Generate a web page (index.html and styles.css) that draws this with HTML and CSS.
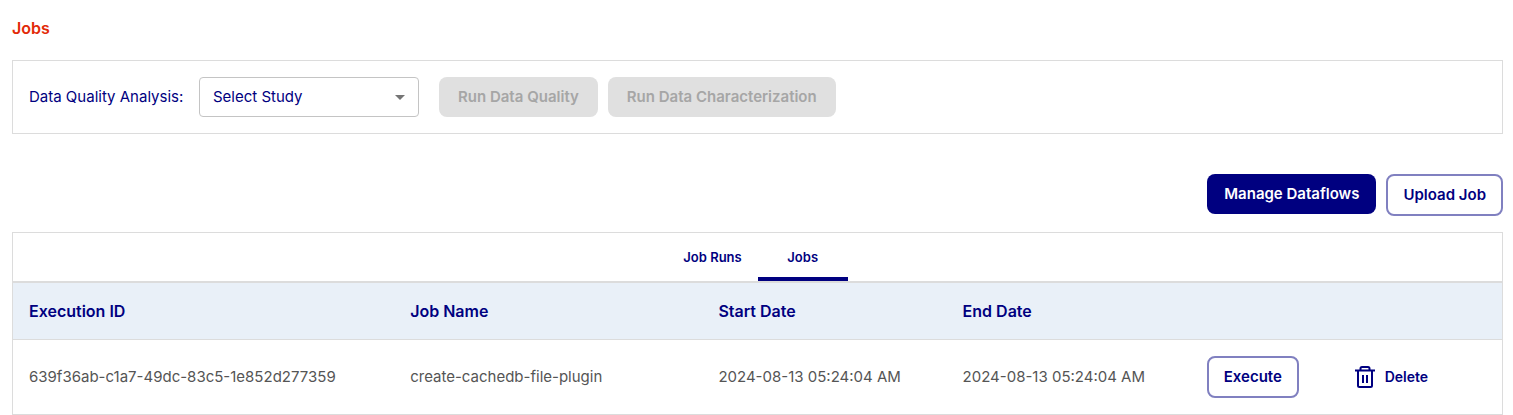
FILE: index.html
```html
<!DOCTYPE html>
<html lang="en">
<head>
<meta charset="utf-8">
<title>Jobs</title>
<link rel="stylesheet" href="styles.css">
</head>
<body>
<main class="page">
  <h1 class="title">Jobs</h1>
  <section class="panel analysis">
    <label class="analysis-label" for="study">Data Quality Analysis:</label>
    <div class="select">
      <select class="select-input" id="study"><option>Select Study</option></select>
      <svg class="select-arrow" viewBox="0 0 24 24" aria-hidden="true"><path d="M7 10l5 5 5-5z"/></svg>
    </div>
    <div class="button-group">
      <button class="button button-disabled" type="button" disabled>Run Data Quality</button>
      <button class="button button-disabled" type="button" disabled>Run Data Characterization</button>
    </div>
  </section>
  <div class="button-group actions">
    <button class="button button-primary" type="button">Manage Dataflows</button>
    <button class="button button-outline" type="button">Upload Job</button>
  </div>
  <section class="panel">
    <div class="tabs" role="tablist">
      <button class="tab" type="button" role="tab" aria-selected="false">Job Runs</button>
      <button class="tab tab-active" type="button" role="tab" aria-selected="true">Jobs</button>
    </div>
    <table class="table">
      <colgroup>
        <col class="col-id"><col class="col-name"><col class="col-date"><col class="col-date"><col class="col-run"><col class="col-delete">
      </colgroup>
      <thead>
        <tr><th>Execution ID</th><th>Job Name</th><th>Start Date</th><th>End Date</th><th></th><th></th></tr>
      </thead>
      <tbody>
        <tr>
          <td>639f36ab-c1a7-49dc-83c5-1e852d277359</td>
          <td>create-cachedb-file-plugin</td>
          <td>2024-08-13 05:24:04 AM</td>
          <td>2024-08-13 05:24:04 AM</td>
          <td><button class="button button-outline" type="button">Execute</button></td>
          <td>
            <button class="delete" type="button">
              <svg class="delete-icon" viewBox="0 0 24 24" aria-hidden="true"><path d="M2 5.500H22M7.500 5V3.500Q7.500 2 9 2H15Q16.500 2 16.500 3.500V5M5 5V20.500Q5 22 6.500 22H17.500Q19 22 19 20.500V5M10 10V18M14 10V18"/></svg>
              Delete
            </button>
          </td>
        </tr>
      </tbody>
    </table>
  </section>
</main>
</body>
</html>
```
FILE: styles.css
```css
* {
  box-sizing: border-box;
}

body {
  margin: 0;
  background: #fff;
  color: #000080;
  font-family: Inter, "Liberation Sans", sans-serif;
  font-size: 15px;
  line-height: 24px;
}

button,
select {
  font: inherit;
  color: inherit;
}

.page {
  padding: 16px 10px 0 12px;
}

.title {
  margin: 0 0 20px;
  color: #e22a08;
  font-size: 16px;
  font-weight: 600;
  line-height: 24px;
}

.panel {
  border: 1px solid #dcdcdc;
}

.analysis {
  display: flex;
  align-items: center;
  padding: 16px;
}

.analysis-label {
  min-width: 160px;
  margin-right: 10px;
}

.select {
  display: grid;
  align-items: center;
  width: 220px;
  margin-right: 20px;
}

.select-input {
  grid-area: 1 / 1;
  width: 100%;
  height: 40px;
  padding: 0 32px 0 13px;
  appearance: none;
  background: #fff;
  border: 1px solid #c4c4c4;
  border-radius: 4px;
}

.select-arrow {
  grid-area: 1 / 1;
  justify-self: end;
  width: 24px;
  height: 24px;
  margin-right: 7px;
  fill: #757575;
  pointer-events: none;
}

.button-group {
  display: flex;
  align-items: flex-start;
  gap: 10px;
}

.button {
  padding: 8px 17px;
  border: 0;
  border-radius: 8px;
  font-weight: 600;
  white-space: nowrap;
}

.button-disabled {
  padding: 8px 19px;
  background: #e0e0e0;
  color: #a6a6a6;
}

.button-primary {
  background: #000080;
  color: #fff;
}

.button-outline {
  padding: 7px 15px;
  background: #fff;
  border: 2px solid #8080c0;
}

.actions {
  justify-content: flex-end;
  margin: 40px 0 16px;
}

.tabs {
  display: flex;
  justify-content: center;
  border-bottom: 2px solid #dcdcdc;
}

.tab {
  min-width: 90px;
  height: 48px;
  padding: 0 16px;
  background: none;
  border: 0;
  font-size: 13px;
  font-weight: 600;
}

.tab-active {
  box-shadow: inset 0 -4px #000080;
}

.table {
  width: 100%;
  border-collapse: collapse;
  table-layout: fixed;
}

.col-id {
  width: 25.6%;
}

.col-name {
  width: 20.7%;
}

.col-date {
  width: 16.4%;
}

.col-run {
  width: 9.8%;
}

.col-delete {
  width: 11.1%;
}

.table th {
  padding: 16px;
  background: #e9f0f8;
  border-bottom: 1px solid #dcdcdc;
  font-size: 16px;
  font-weight: 600;
  text-align: left;
}

.table td {
  padding: 16px;
  color: #555;
  white-space: nowrap;
}

.table .button {
  display: block;
  color: #000080;
}

.delete {
  display: flex;
  align-items: center;
  gap: 8px;
  padding: 0;
  background: none;
  border: 0;
  color: #000080;
  font-size: 14px;
  font-weight: 600;
}

.delete-icon {
  width: 24px;
  height: 24px;
  fill: none;
  stroke: #000080;
  stroke-width: 2;
}
```
